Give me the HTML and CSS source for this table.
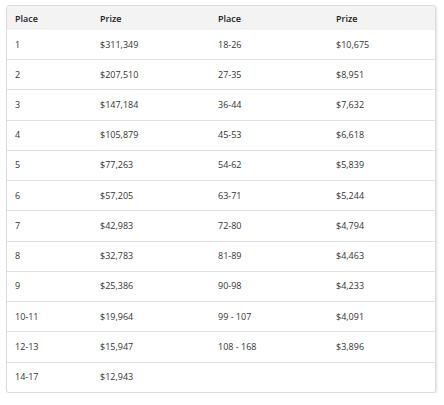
FILE: index.html
```html
<!DOCTYPE html>
<html>
<head>
<meta charset="utf-8">
<link rel="stylesheet" href="styles.css">
</head>
<body>
<div class="card">
<table class="prizes">
<colgroup>
<col class="c1"><col class="c2"><col class="c3"><col class="c4">
</colgroup>
<thead>
<tr><th>Place</th><th>Prize</th><th>Place</th><th>Prize</th></tr>
</thead>
<tbody>
<tr><td>1</td><td>$311,349</td><td>18-26</td><td>$10,675</td></tr>
<tr><td>2</td><td>$207,510</td><td>27-35</td><td>$8,951</td></tr>
<tr><td>3</td><td>$147,184</td><td>36-44</td><td>$7,632</td></tr>
<tr><td>4</td><td>$105,879</td><td>45-53</td><td>$6,618</td></tr>
<tr><td>5</td><td>$77,263</td><td>54-62</td><td>$5,839</td></tr>
<tr><td>6</td><td>$57,205</td><td>63-71</td><td>$5,244</td></tr>
<tr><td>7</td><td>$42,983</td><td>72-80</td><td>$4,794</td></tr>
<tr><td>8</td><td>$32,783</td><td>81-89</td><td>$4,463</td></tr>
<tr><td>9</td><td>$25,386</td><td>90-98</td><td>$4,233</td></tr>
<tr><td>10-11</td><td>$19,964</td><td>99 - 107</td><td>$4,091</td></tr>
<tr><td>12-13</td><td>$15,947</td><td>108 - 168</td><td>$3,896</td></tr>
<tr><td>14-17</td><td>$12,943</td><td></td><td></td></tr>
</tbody>
</table>
</div>
</body>
</html>
```

FILE: styles.css
```css
html, body {
  margin: 0;
  padding: 0;
  background: #fff;
}
body {
  padding: 5px 0 0 6px;
  font-family: "Open Sans", "DejaVu Sans", sans-serif;
  font-size: 9px;
  color: #333;
}
.card {
  width: 428px;
  border: 1px solid #dcdcdc;
  border-radius: 3px;
  box-shadow: 1px 1px 2px rgba(0,0,0,0.12);
  overflow: hidden;
}
.prizes {
  width: 100%;
  border-collapse: collapse;
  table-layout: fixed;
}
.c1 { width: 85px; }
.c2 { width: 118px; }
.c3 { width: 118px; }
.c4 { width: 107px; }
.prizes th {
  background: #f3f3f3;
  height: 24px;
  padding: 0 0 0 8px;
  text-align: left;
  font-weight: 600;
  color: #222;
  vertical-align: middle;
}
.prizes td {
  height: 29.25px;
  padding: 0 0 0 8px;
  border-top: 1px solid #e2e2e2;
  vertical-align: middle;
  line-height: 12px;
}
.prizes tbody tr:first-child td {
  border-top: none;
  height: 29px;
}
```
